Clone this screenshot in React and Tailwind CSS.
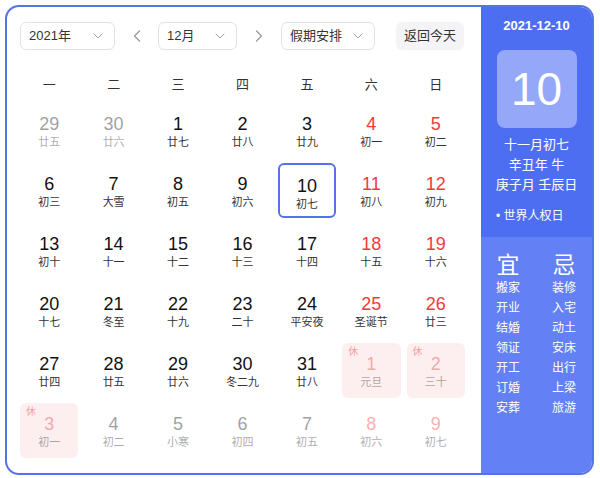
import { ChevronDown, ChevronLeft, ChevronRight } from "lucide-react";

const FONT = { fontFamily: '"Liberation Sans", "Noto Sans CJK SC", sans-serif' };

// [day, lunar, flags] flags: o = other month, r = weekend red, h = holiday, s = selected
const rows = [
  [[29, "廿五", "o"], [30, "廿六", "o"], [1, "廿七"], [2, "廿八"], [3, "廿九"], [4, "初一", "r"], [5, "初二", "r"]],
  [[6, "初三"], [7, "大雪"], [8, "初五"], [9, "初六"], [10, "初七", "s"], [11, "初八", "r"], [12, "初九", "r"]],
  [[13, "初十"], [14, "十一"], [15, "十二"], [16, "十三"], [17, "十四"], [18, "十五", "r"], [19, "十六", "r"]],
  [[20, "十七"], [21, "冬至"], [22, "十九"], [23, "二十"], [24, "平安夜"], [25, "圣诞节", "r"], [26, "廿三", "r"]],
  [[27, "廿四"], [28, "廿五"], [29, "廿六"], [30, "冬二九"], [31, "廿八"], [1, "元旦", "orh"], [2, "三十", "orh"]],
  [[3, "初一", "orh"], [4, "初二", "o"], [5, "小寒", "o"], [6, "初四", "o"], [7, "初五", "o"], [8, "初六", "or"], [9, "初七", "or"]],
];

const weekdays = ["一", "二", "三", "四", "五", "六", "日"];
const yi = ["搬家", "开业", "结婚", "领证", "开工", "订婚", "安葬"];
const ji = ["装修", "入宅", "动土", "安床", "出行", "上梁", "旅游"];

function Select({ label, width }) {
  return (
    <div
      className="flex h-[28px] items-center justify-between rounded-md border border-[#e2e2e2] pl-[8px] pr-[8px] text-[13px] text-[#333]"
      style={{ width }}
    >
      <span>{label}</span>
      <ChevronDown size={16} strokeWidth={1.4} className="text-[#9a9a9a]" />
    </div>
  );
}

function DayCell({ day, lunar, flags = "" }) {
  const other = flags.includes("o");
  const red = flags.includes("r");
  const holiday = flags.includes("h");
  const selected = flags.includes("s");
  return (
    <div
      className={`relative flex h-[55px] flex-col items-center rounded-md pt-[11px] ${
        holiday ? "bg-[#fdeff0]" : ""
      } ${selected ? "border-2 border-[#5573e6] pt-[9px]" : ""}`}
    >
      {holiday && (
        <span className="absolute left-[6px] top-[3px] text-[10px] leading-[12px] text-[#f3a2a6]">休</span>
      )}
      <div className={`flex flex-col items-center ${other ? "opacity-40" : ""}`}>
        <span className={`text-[18px] leading-5 ${red ? "text-[#f33a3a]" : "text-[#111]"}`}>{day}</span>
        <span className="mt-[1px] text-[11px] leading-[14px] text-[#333]">{lunar}</span>
      </div>
    </div>
  );
}

export default function App() {
  return (
    <div className="p-[5px]" style={FONT}>
      <div className="flex h-[470px] w-[589px] overflow-hidden rounded-[14px] border-2 border-[#5573e6] bg-white">
        <div className="flex-1 pl-[13px] pr-[16px] pt-[15px]">
          <div className="flex items-center">
            <Select label="2021年" width={95} />
            <div className="flex w-[43px] justify-center text-[#999]">
              <ChevronLeft size={20} strokeWidth={1.5} />
            </div>
            <Select label="12月" width={79} />
            <div className="flex w-[44px] justify-center text-[#999]">
              <ChevronRight size={20} strokeWidth={1.5} />
            </div>
            <Select label="假期安排" width={94} />
            <div className="ml-[21px] flex h-[28px] w-[68px] items-center justify-center rounded-md bg-[#f4f4f6] text-[13px] text-[#333]">
              返回今天
            </div>
          </div>

          <div className="mt-[25px] grid h-5 grid-cols-7 gap-x-[6px] text-[13px] leading-5 text-[#333]">
            {weekdays.map((w) => (
              <div key={w} className="text-center">{w}</div>
            ))}
          </div>

          <div className="mt-2 grid grid-cols-7 gap-x-[6px] gap-y-[5px]">
            {rows.flat().map(([d, l, f], i) => (
              <DayCell key={i} day={d} lunar={l} flags={f} />
            ))}
          </div>
        </div>

        <div className="flex w-[111px] flex-col text-white">
          <div className="flex h-[230px] flex-col items-center bg-[#4e6ef2] pt-[11px]">
            <div className="text-[13px] font-bold leading-4">2021-12-10</div>
            <div className="mt-[16px] flex h-[78px] w-[80px] items-center justify-center rounded-lg bg-[#94a7f8] text-[46px] leading-none">
              10
            </div>
            <div className="mt-[7px] text-center text-[13px] leading-5">
              <div>十一月初七</div>
              <div>辛丑年 牛</div>
              <div>庚子月 壬辰日</div>
            </div>
            <div className="mt-[13px] w-full pl-[15px] text-[12px] leading-4">• 世界人权日</div>
          </div>
          <div className="flex flex-1 gap-[32px] bg-[#6380f5] pl-[15px] pt-[16px]">
            <div className="flex w-[24px] flex-col items-center">
              <div className="text-[23px] leading-6">宜</div>
              <div className="mt-[1px] flex flex-col text-[12px] leading-5">
                {yi.map((t) => <span key={t}>{t}</span>)}
              </div>
            </div>
            <div className="flex w-[24px] flex-col items-center">
              <div className="text-[23px] leading-6">忌</div>
              <div className="mt-[1px] flex flex-col text-[12px] leading-5">
                {ji.map((t) => <span key={t}>{t}</span>)}
              </div>
            </div>
          </div>
        </div>
      </div>
    </div>
  );
}
